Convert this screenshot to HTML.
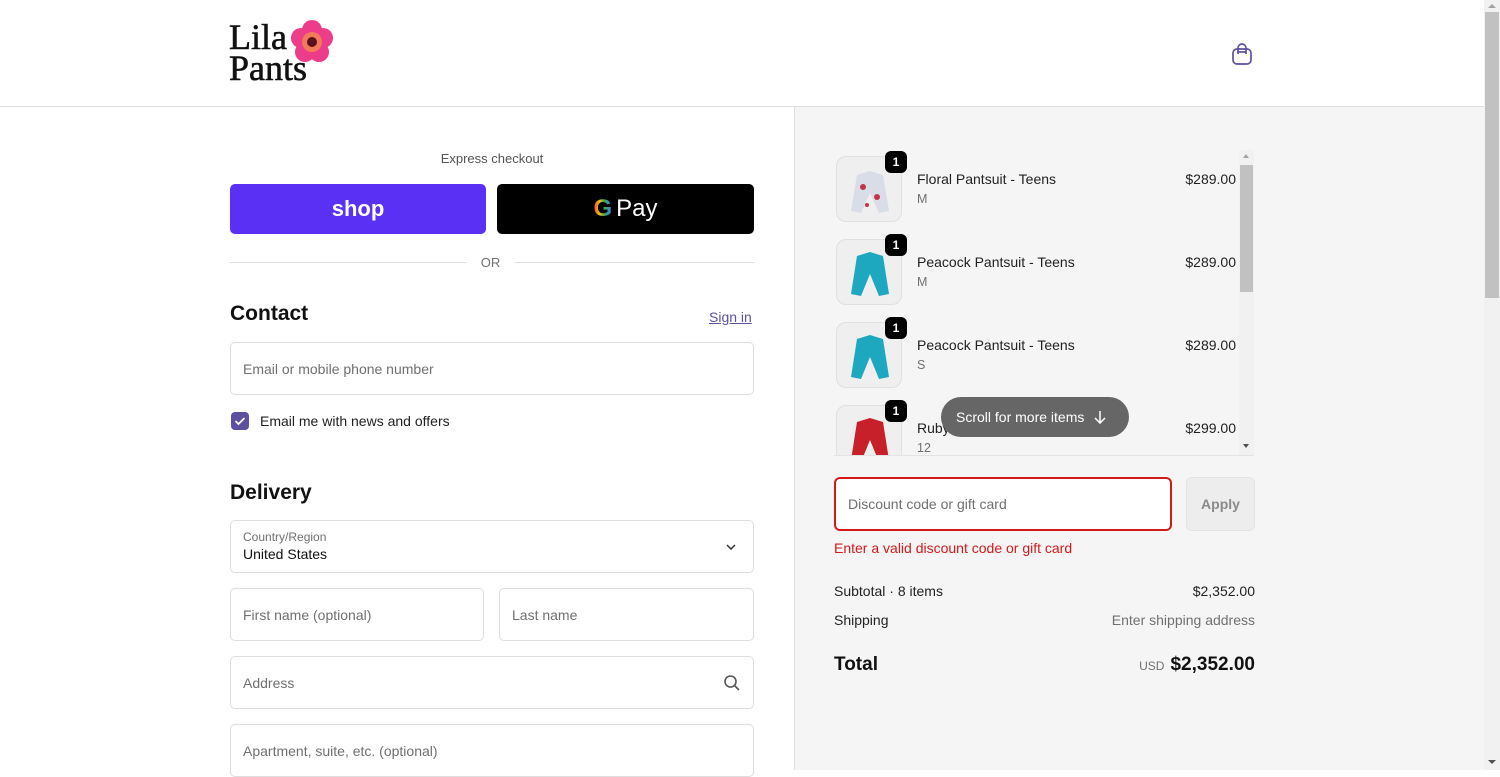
<!DOCTYPE html>
<html><head><meta charset="utf-8"><style>
*{box-sizing:border-box;margin:0;padding:0}
body{width:1500px;height:770px;overflow:hidden;font-family:"Liberation Sans",sans-serif;color:#111;background:#fff;position:relative;font-size:14px}
.a{position:absolute}
.inp{position:absolute;border:1px solid #dedede;border-radius:5px;background:#fff;color:#707070;font-size:14px;padding-left:12px;display:flex;align-items:center}
.thumb{position:absolute;left:836px;width:66px;height:66px;border:1px solid #e0e0e0;border-radius:10px;background:#efefef;overflow:visible}
.badge{position:absolute;right:-6px;top:-6px;width:22px;height:22px;background:#000;color:#fff;border-radius:6px;font-size:12px;font-weight:bold;display:flex;align-items:center;justify-content:center}
.nm{position:absolute;left:917px;font-size:14px;color:#222}
.sz{position:absolute;left:917px;font-size:12.5px;color:#707070}
.pr{position:absolute;right:264px;font-size:14px;color:#222}
</style></head><body>
<div class="a" style="left:229px;top:22px;font-family:'Liberation Serif',serif;font-size:36px;line-height:31px;color:#111;-webkit-text-stroke:0.6px #111">Lila<br>Pants</div>
<svg class="a" style="left:290px;top:20px" width="44" height="44" viewBox="0 0 44 44">
<g fill="#ec3c8a"><circle cx="22" cy="10" r="10"/><circle cx="33" cy="18" r="10"/><circle cx="29" cy="32" r="10"/><circle cx="15" cy="32" r="10"/><circle cx="11" cy="18" r="10"/></g>
<circle cx="22" cy="22" r="10" fill="#f07a5a"/><circle cx="22" cy="22" r="5" fill="#5a1020"/></svg>
<svg class="a" style="left:1231px;top:42px" width="22" height="24" viewBox="0 0 22 24" fill="none" stroke="#5f4fa0" stroke-width="1.7"><rect x="2" y="7" width="18" height="15" rx="4"/><path d="M7 12V6a4 4 0 0 1 8 0v6"/><path d="M7 10h8"/></svg>
<div class="a" style="left:0;top:106px;width:1484px;height:1px;background:#dedede"></div>
<div class="a" style="left:794px;top:107px;width:690px;height:663px;background:#f5f5f5;border-left:1px solid #dedede"></div>
<div class="a" style="left:1484px;top:0;width:16px;height:770px;background:#f1f1f1"></div>
<div class="a" style="left:1485px;top:12px;width:14px;height:286px;background:#c1c1c1"></div>
<div class="a" style="left:1488px;top:4px;width:0;height:0;border-left:4px solid transparent;border-right:4px solid transparent;border-bottom:4px solid #a3a3a3"></div>
<div class="a" style="left:1488px;top:760px;width:0;height:0;border-left:4px solid transparent;border-right:4px solid transparent;border-top:4px solid #505050"></div>
<div class="a" style="left:230px;top:151px;width:524px;text-align:center;font-size:13px;color:#555">Express checkout</div>
<div class="a" style="left:230px;top:184px;width:256px;height:50px;background:#5a31f4;border-radius:5px;color:#fff;font-weight:bold;font-size:22px;display:flex;align-items:center;justify-content:center">shop</div>
<div class="a" style="left:497px;top:184px;width:257px;height:50px;background:#000;border-radius:5px;color:#fff;font-size:24px;display:flex;align-items:center;justify-content:center"><span style="font-weight:bold;background:linear-gradient(90deg,#ea4335 0,#fbbc05 35%,#34a853 60%,#4285f4 100%);-webkit-background-clip:text;color:transparent;margin-right:4px">G</span>Pay</div>
<div class="a" style="left:230px;top:262px;width:236px;height:1px;background:#dedede"></div>
<div class="a" style="left:515px;top:262px;width:239px;height:1px;background:#dedede"></div>
<div class="a" style="left:466px;top:255px;width:49px;text-align:center;font-size:13px;color:#707070">OR</div>
<div class="a" style="left:230px;top:302px;font-size:21px;font-weight:600;color:#111">Contact</div>
<div class="a" style="left:709px;top:309px;font-size:14px;color:#5f4fa0;text-decoration:underline">Sign in</div>
<div class="inp" style="left:230px;top:342px;width:524px;height:53px">Email or mobile phone number</div>
<div class="a" style="left:231px;top:412px;width:18px;height:18px;background:#5f4fa0;border-radius:4px"><svg width="18" height="18"><path d="M4.5 9l3 3 6-6" stroke="#fff" stroke-width="1.8" fill="none"/></svg></div>
<div class="a" style="left:260px;top:413px;font-size:14px;color:#222">Email me with news and offers</div>
<div class="a" style="left:230px;top:481px;font-size:21px;font-weight:600;color:#111">Delivery</div>
<div class="inp" style="left:230px;top:520px;width:524px;height:53px;display:block;padding-top:9px">
<div style="font-size:12px;color:#707070">Country/Region</div><div style="font-size:14px;color:#111;margin-top:2px">United States</div></div>
<svg class="a" style="left:725px;top:542px" width="12" height="10"><path d="M2 3l4 4 4-4" stroke="#333" stroke-width="1.5" fill="none"/></svg>
<div class="inp" style="left:230px;top:588px;width:254px;height:53px">First name (optional)</div>
<div class="inp" style="left:499px;top:588px;width:255px;height:53px">Last name</div>
<div class="inp" style="left:230px;top:656px;width:524px;height:53px">Address</div>
<svg class="a" style="left:723px;top:674px" width="18" height="18" fill="none" stroke="#555" stroke-width="1.6"><circle cx="7.5" cy="7.5" r="5.5"/><path d="M11.5 11.5l4.5 4.5"/></svg>
<div class="inp" style="left:230px;top:724px;width:524px;height:53px">Apartment, suite, etc. (optional)</div>
<div class="thumb" style="top:156px"><div class="badge">1</div><svg width="66" height="66"><path d="M20 18l13-4 13 4 6 36-10 2-9-20-9 20-10-2z" fill="#d9dde8"/><g fill="#c2344a"><circle cx="26" cy="30" r="3"/><circle cx="40" cy="40" r="3"/><circle cx="30" cy="48" r="2"/></g></svg></div>
<div class="nm" style="top:171px">Floral Pantsuit - Teens</div><div class="sz" style="top:192px">M</div><div class="pr" style="top:171px">$289.00</div>
<div class="thumb" style="top:239px"><div class="badge">1</div><svg width="66" height="66"><path d="M20 16l13-4 13 4 6 38-10 2-9-22-9 22-10-2z" fill="#1ea8c0"/></svg></div>
<div class="nm" style="top:254px">Peacock Pantsuit - Teens</div><div class="sz" style="top:275px">M</div><div class="pr" style="top:254px">$289.00</div>
<div class="thumb" style="top:322px"><div class="badge">1</div><svg width="66" height="66"><path d="M20 16l13-4 13 4 6 38-10 2-9-22-9 22-10-2z" fill="#1ea8c0"/></svg></div>
<div class="nm" style="top:337px">Peacock Pantsuit - Teens</div><div class="sz" style="top:358px">S</div><div class="pr" style="top:337px">$289.00</div>
<div class="a" style="left:834px;top:400px;width:406px;height:55px;overflow:hidden">
<div class="thumb" style="left:2px;top:5px"><div class="badge">1</div><svg width="66" height="66"><path d="M20 16l13-4 13 4 6 38-10 2-9-22-9 22-10-2z" fill="#c8202a"/></svg></div></div>
<div class="nm" style="top:420px">Ruby</div><div class="sz" style="top:441px">12</div><div class="pr" style="top:420px">$299.00</div>
<div class="a" style="left:834px;top:455px;width:420px;height:1px;background:#e3e3e3"></div>
<div class="a" style="left:1239px;top:150px;width:15px;height:305px;background:#f1f1f1"></div>
<div class="a" style="left:1240px;top:165px;width:13px;height:127px;background:#c1c1c1"></div>
<div class="a" style="left:1243px;top:154px;border-left:3.5px solid transparent;border-right:3.5px solid transparent;border-bottom:4px solid #a3a3a3"></div>
<div class="a" style="left:1243px;top:444px;border-left:3.5px solid transparent;border-right:3.5px solid transparent;border-top:4px solid #505050"></div>
<div class="a" style="left:941px;top:397px;width:188px;height:40px;background:#666;border-radius:20px;color:#fff;font-size:14px;display:flex;align-items:center;padding-left:15px">Scroll for more items<svg style="margin-left:10px" width="12" height="14" fill="none" stroke="#fff" stroke-width="1.5"><path d="M6 1v12M1 8l5 5 5-5"/></svg></div>
<div class="inp" style="left:834px;top:477px;width:338px;height:54px;border:2px solid #d31a1a;border-radius:6px">Discount code or gift card</div>
<div class="a" style="left:1186px;top:477px;width:69px;height:54px;background:#ededed;border:1px solid #e3e3e3;border-radius:6px;color:#8a8a8a;font-size:14px;font-weight:bold;display:flex;align-items:center;justify-content:center">Apply</div>
<div class="a" style="left:834px;top:540px;font-size:14px;color:#d31a1a">Enter a valid discount code or gift card</div>
<div class="a" style="left:834px;top:583px;font-size:14px;color:#222">Subtotal · 8 items</div>
<div class="a" style="right:245px;top:583px;font-size:14px;color:#222">$2,352.00</div>
<div class="a" style="left:834px;top:612px;font-size:14px;color:#222">Shipping</div>
<div class="a" style="right:245px;top:612px;font-size:14px;color:#707070">Enter shipping address</div>
<div class="a" style="left:834px;top:654px;font-size:19px;font-weight:bold;color:#111">Total</div>
<div class="a" style="right:245px;top:654px;font-size:19px;font-weight:bold;color:#111"><span style="font-size:12px;font-weight:normal;color:#707070;margin-right:6px">USD</span>$2,352.00</div>
</body></html>
